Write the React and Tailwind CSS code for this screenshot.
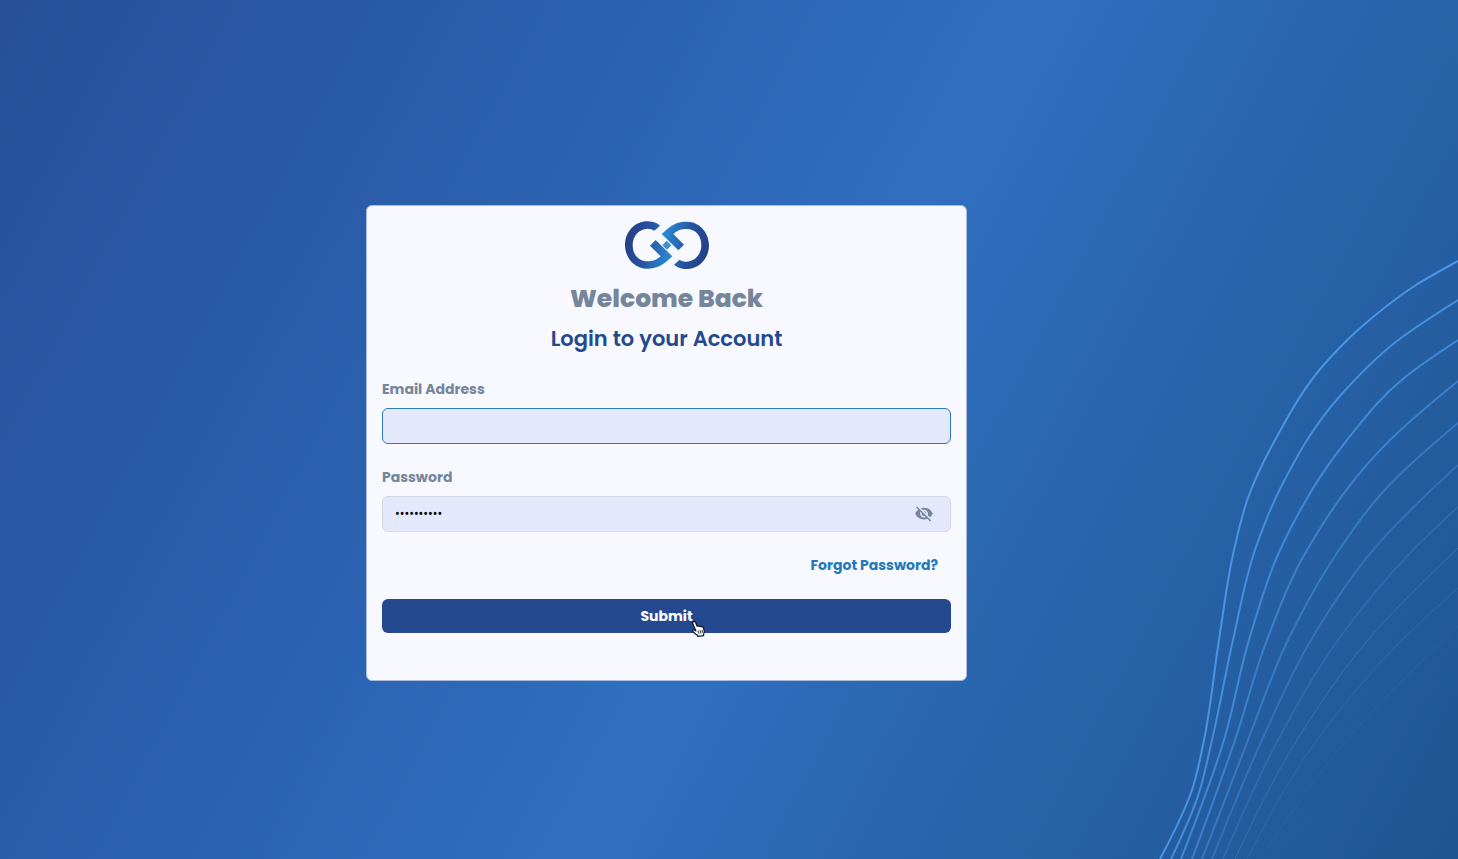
import React, { useState } from 'react';
import { IoMdEye, IoMdEyeOff } from 'react-icons/io';

// Each wave is sampled top to bottom as [x, y], from the right edge down to the bottom edge.
const WAVES = [
  { width: 2, opacity: 0.9, points: [[310, 21], [268, 45], [225, 77], [180, 120], [127, 200], [101, 255], [86, 310], [71, 400], [56, 500], [44, 550], [12, 619]] },
  { width: 2, opacity: 0.8, points: [[310, 60], [249, 101], [192, 156], [133, 247], [107, 310], [85, 400], [64, 500], [50, 556], [23, 619]] },
  { width: 2, opacity: 0.7, points: [[310, 100], [256, 138], [199, 200], [132, 310], [101, 400], [76, 500], [33, 619]] },
  { width: 2, opacity: 0.58, points: [[310, 141], [242, 200], [159, 310], [119, 400], [87, 500], [44, 619]] },
  { width: 2, opacity: 0.47, points: [[310, 183], [233, 254], [191, 310], [140, 400], [100, 500], [54, 619]] },
  { width: 2, opacity: 0.36, points: [[310, 225], [225, 310], [163, 400], [114, 500], [64, 619]] },
  { width: 2, opacity: 0.24, points: [[310, 267], [265, 310], [190, 400], [130, 500], [75, 619]] },
  { width: 1, opacity: 0.34, points: [[310, 308], [220, 400], [149, 500], [87, 619]] },
  { width: 1, opacity: 0.22, points: [[310, 348], [254, 400], [169, 500], [99, 619]] },
  { width: 1, opacity: 0.12, points: [[310, 386], [199, 500], [112, 619]] },
  { width: 1, opacity: 0.05, points: [[310, 424], [230, 500], [128, 619]] },
];

function smoothPath(points) {
  const secants = points.slice(1).map(([x, y], i) => (x - points[i][0]) / (y - points[i][1]));
  const last = points.length - 1;
  const slopes = points.map((p, i) => {
    if (i === 0 || i === last) return 0;
    const before = p[1] - points[i - 1][1];
    const after = points[i + 1][1] - p[1];
    return (secants[i - 1] * after + secants[i] * before) / (before + after);
  });
  slopes[0] = (3 * secants[0] - slopes[1]) / 2;
  slopes[last] = (3 * secants[last - 1] - slopes[last - 1]) / 2;

  let d = `M${points[0][0]} ${points[0][1]}`;
  for (let i = 0; i < last; i++) {
    const [x1, y1] = points[i];
    const [x2, y2] = points[i + 1];
    const h = (y2 - y1) / 3;
    d += ` C${x1 + slopes[i] * h} ${y1 + h} ${x2 - slopes[i + 1] * h} ${y2 - h} ${x2} ${y2}`;
  }
  return d;
}

function Waves() {
  return (
    <svg className="absolute right-0 bottom-0 w-[310px] h-[619px] pointer-events-none" viewBox="0 0 310 619" fill="none" aria-hidden="true">
      {WAVES.map((wave, i) => (
        <path key={i} d={smoothPath(wave.points)} stroke="#4c9bed" strokeWidth={wave.width} opacity={wave.opacity} />
      ))}
    </svg>
  );
}

const LOGO_HALF =
  'M160 58 C147 47 132 45 118 45 C82 47 55 79 55 116 C55 155 85 188 122 187 C150 187 166 180 197 150 L147 101 L130 118 L162 150 C150 161 138 165 122 165 C96 165 78 145 78 117 C78 88 98 68 122 67 C130 67 138 69 143 73 Z';

function Logo() {
  return (
    <svg className="w-[86px] h-12" viewBox="52 44 258 144" role="img" aria-label="Company logo">
      <defs>
        <linearGradient id="logoFade" gradientUnits="userSpaceOnUse" x1="55" y1="100" x2="197" y2="135">
          <stop offset="0" stopColor="#253f86" />
          <stop offset="0.4" stopColor="#264f9c" />
          <stop offset="1" stopColor="#2c8bd6" />
        </linearGradient>
      </defs>
      <path d={LOGO_HALF} fill="url(#logoFade)" />
      <path d={LOGO_HALF} fill="url(#logoFade)" transform="rotate(180 181 116.5)" />
      <path d="M180 103 L194 117 L181 130 L167 117 Z" fill="#3b8fd3" />
    </svg>
  );
}

function HandCursor() {
  return (
    <svg className="absolute left-1/2 top-5 ml-6 w-4 h-[18px] pointer-events-none" viewBox="0 0 16 18" aria-hidden="true">
      <path
        d="M2.6 2.6c.9-.4 1.7.1 2 .9l1.6 3.7c.6-.6 1.6-.5 2 .3.6-.6 1.7-.5 2 .3.7-.5 1.700-.2 2 .6l1 3c.5 1.700-.1 2.900-.7 4.100l.1 1.200-5.900.600-.500-1.200c-1.700-.700-3-2.100-4.300-3.700-.6-.9.4-2 1.500-1.400l1.500.9L1.700 4.400c-.3-.8.100-1.500.900-1.800z"
        fill="#fff"
        stroke="#111827"
        strokeWidth="1.3"
        strokeLinejoin="round"
      />
      <path d="M7 11.500l1 3.200M9 11.200l.9 3.200M10.900 10.800l.8 3" stroke="#111827" strokeWidth="0.9" />
    </svg>
  );
}

export default function App() {
  const [email, setEmail] = useState('');
  const [password, setPassword] = useState('abcdefghij');
  const [showPassword, setShowPassword] = useState(false);

  return (
    <div className="relative min-h-screen overflow-hidden flex items-center justify-center pt-[26px] pr-[125px] font-['Poppins','Inter',sans-serif] bg-[linear-gradient(118deg,#26509a_0%,#2a5ba8_22%,#2c65b4_38%,#306fc0_54%,#2f6cbd_59%,#2b69b3_64%,#2761a6_78%,#205592_100%)]">
      <Waves />

      <main className="relative w-full max-w-[601px] rounded-md border border-[#a9bcd8] bg-[#f8f9fe] px-[15px] pt-[15px] pb-[47px]">
        <div className="flex flex-col items-center">
          <Logo />
          <h1 className="mt-3 text-[25px] leading-9 font-extrabold text-[#74859c]">Welcome Back</h1>
          <h2 className="mt-1 text-[21px] leading-9 font-semibold text-[#24498c]">Login to your Account</h2>
        </div>

        <form onSubmit={(e) => e.preventDefault()} className="mt-5">
          <label htmlFor="email" className="block text-sm leading-6 font-bold text-[#74859c]">Email Address</label>
          <input
            id="email"
            type="email"
            value={email}
            onChange={(e) => setEmail(e.target.value)}
            className="mt-[7px] block w-full h-9 rounded-md border border-[#2c7cb8] bg-[#e3e8fd] px-3 text-sm outline-none"
          />

          <label htmlFor="password" className="mt-[21px] block text-sm leading-6 font-bold text-[#74859c]">Password</label>
          <div className="mt-[7px] flex items-center h-9 rounded-md border border-[#d5d9e6] bg-[#e3e8fd] pl-3 pr-4">
            <input
              id="password"
              type={showPassword ? 'text' : 'password'}
              value={password}
              onChange={(e) => setPassword(e.target.value)}
              className="flex-1 min-w-0 bg-transparent font-['Roboto',sans-serif] text-sm text-black outline-none"
            />
            <button
              type="button"
              aria-label={showPassword ? 'Hide password' : 'Show password'}
              onClick={() => setShowPassword(!showPassword)}
              className="text-[#74859c] cursor-pointer"
            >
              {showPassword ? <IoMdEye size={20} /> : <IoMdEyeOff size={20} />}
            </button>
          </div>

          <div className="mt-[21px] flex justify-end pr-[13px]">
            <a href="#forgot" className="text-sm leading-6 font-bold text-[#2278b8]">Forgot Password?</a>
          </div>

          <div className="relative mt-[22px]">
            <button type="submit" className="block w-full h-[34px] rounded-md bg-[#24498f] text-sm font-bold text-white cursor-pointer">
              Submit
            </button>
            <HandCursor />
          </div>
        </form>
      </main>
    </div>
  );
}
